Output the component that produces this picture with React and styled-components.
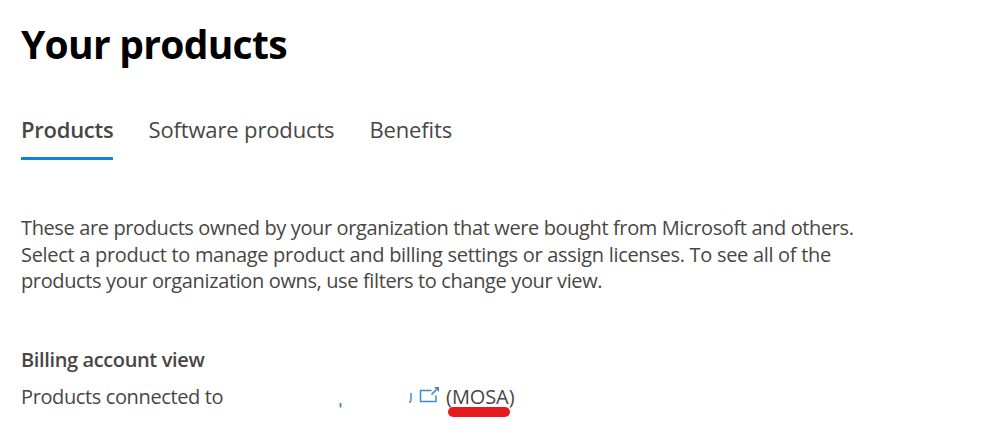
import React from "react";
import styled, { createGlobalStyle } from "styled-components";

const GlobalStyle = createGlobalStyle`
  body {
    margin: 0;
    background: #fff;
    color: #484644;
    font-family: "Open Sans", "Noto Sans", sans-serif;
  }
`;

const Page = styled.main`
  display: flex;
  flex-direction: column;
  box-sizing: border-box;
  min-height: 439px;
  padding: 19px 21px 0;
`;

const Title = styled.h1`
  margin: 0;
  font-size: 39px;
  line-height: 50px;
  color: #000;
  letter-spacing: -0.72px;
`;

const Tabs = styled.nav`
  display: flex;
  gap: 35px;
  margin-top: 44px;
`;

const Tab = styled.a`
  padding-bottom: 12px;
  font-size: 22px;
  line-height: 32px;
  letter-spacing: ${(p) => (p.$active ? "-0.25px" : "-0.14px")};
  font-weight: ${(p) => (p.$active ? 600 : 400)};
  border-bottom: 3px solid ${(p) => (p.$active ? "#0f82dc" : "transparent")};
`;

const Description = styled.p`
  margin: 55px 0 0;
  font-size: 20px;
  line-height: 26.6px;
`;

const Line = styled.span`
  display: block;
  letter-spacing: ${(p) => p.$spacing}px;
`;

const SectionTitle = styled.h2`
  margin: 51px 0 0;
  font-size: 20px;
  line-height: 27px;
  font-weight: 600;
  letter-spacing: -0.37px;
`;

const AccountRow = styled.div`
  display: flex;
  align-items: center;
  margin-top: 10px;
  font-size: 20px;
  line-height: 27px;
  letter-spacing: -0.38px;
`;

const AccountLink = styled.a`
  display: flex;
  margin-left: 115px;
  margin-right: 6px;
`;

const AccountType = styled.span`
  position: relative;
  letter-spacing: -0.1px;
`;

const Marker = styled.span`
  position: absolute;
  left: 2px;
  top: 24px;
  width: 62px;
  height: 10px;
  border-radius: 5px;
  background: #e61b1f;
`;

const tabs = ["Products", "Software products", "Benefits"];

// Leftover strokes of the hidden account name, then the open-in-new icon
const AccountIcon = () => (
  <svg width="102" height="24" viewBox="0 0 102 24" fill="none" stroke="#3a8bd0">
    <path d="M2.5 19v4.5" strokeWidth="1.8" />
    <path d="M73 9v6q0 3-1.8 3.5" strokeWidth="1.5" />
    <path d="M93.5 6.5H82.5v11h15.5V11.5" strokeWidth="1.5" />
    <path d="M93.5 10.5l5-5" strokeWidth="1.7" />
    <path d="M96 3h5v5z" fill="#3a8bd0" stroke="none" />
  </svg>
);

export default function App() {
  return (
    <>
      <GlobalStyle />
      <Page>
        <Title>Your products</Title>
        <Tabs>
          {tabs.map((tab, i) => (
            <Tab key={tab} $active={i === 0}>
              {tab}
            </Tab>
          ))}
        </Tabs>
        <Description>
          <Line $spacing={-0.38}>
            These are products owned by your organization that were bought from Microsoft and others.
          </Line>
          <Line $spacing={-0.3}>
            Select a product to manage product and billing settings or assign licenses. To see all of the
          </Line>
          <Line $spacing={-0.37}>
            products your organization owns, use filters to change your view.
          </Line>
        </Description>
        <SectionTitle>Billing account view</SectionTitle>
        <AccountRow>
          <span>Products connected to</span>
          <AccountLink>
            <AccountIcon />
          </AccountLink>
          <AccountType>
            (MOSA)
            <Marker />
          </AccountType>
        </AccountRow>
      </Page>
    </>
  );
}
